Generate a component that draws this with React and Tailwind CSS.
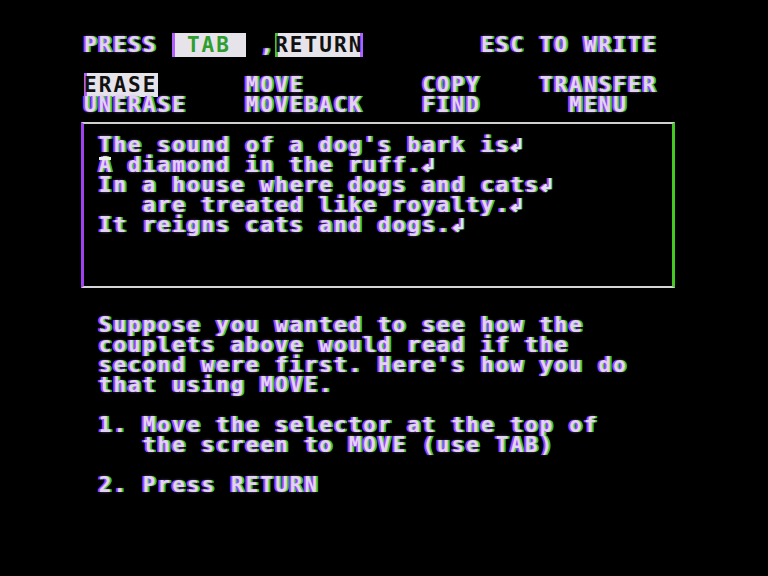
import React from 'react';

const fringe =
  '[text-shadow:-2px_0_0_#a244ff,2px_0_0_#34c834,0_0_3px_rgba(190,140,255,0.5)]';

function Ret() {
  return (
    <svg
      width="14.7"
      height="20"
      viewBox="0 0 14.7 20"
      className="inline-block align-top"
      style={{ filter: 'drop-shadow(-1.5px 0 0 #a244ff) drop-shadow(1.5px 0 0 #34c834)' }}
    >
      <path d="M10 3 V13 H3" fill="none" stroke="#e8def2" strokeWidth="2.6" />
      <path d="M6.5 9.5 L2.5 13 L6.5 16.5" fill="none" stroke="#e8def2" strokeWidth="2.4" />
    </svg>
  );
}

function Row({ children, className = '' }) {
  return (
    <div className={`h-[20px] leading-[20px] whitespace-pre ${className}`}>
      {children || ' '}
    </div>
  );
}

function Inv({ children, className = '' }) {
  return (
    <span className={`bg-[#e6e4ea] [text-shadow:none] ${className}`}>{children}</span>
  );
}

export default function App() {
  return (
    <div className="w-[768px] h-[576px] bg-black overflow-hidden">
      <div
        className={`pl-[84px] pt-[35px] text-[21px] tracking-[2.06px] font-bold text-[#e2d2f4] ${fringe}`}
        style={{ fontFamily: '"DejaVu Sans Mono", "Liberation Mono", monospace' }}
      >
        {/* menu header */}
        <Row>
          {'PRESS '}
          <Inv className="text-[#2f9e2f] shadow-[inset_3px_0_0_#b060ff]">{' TAB '}</Inv>
          {' ,'}
          <Inv className="text-[#111] bg-[#dcefd6] shadow-[inset_3px_0_0_#46c23a,inset_-3px_0_0_#b060ff]">
            RETURN
          </Inv>
          {'        ESC TO WRITE'}
        </Row>
        <Row />
        <Row>
          <Inv className="text-[#111] shadow-[inset_3px_0_0_#b060ff]">ERASE</Inv>
          {'      MOVE        COPY    TRANSFER'}
        </Row>
        <Row>{'UNERASE    MOVEBACK    FIND      MENU'}</Row>

        {/* editing window */}
        <div className="mt-[7px] -ml-[3px] w-[594px] h-[166px] border-t-2 border-b-2 border-l-[3px] border-r-[3px] border-t-[#cfcfcf] border-b-[#d6d6d6] border-l-[#a040f0] border-r-[#44c824] pt-[11px]">
          <Row>
            {' '}
            <span className="relative">
              T
              <span className="absolute left-0 right-[2px] bottom-[-3px] h-[3px] bg-[#e8f0e0]" />
            </span>
            {"he sound of a dog's bark is"}
            <Ret />
          </Row>
          <Row>
            {' A diamond in the ruff.'}
            <Ret />
          </Row>
          <Row>
            {' In a house where dogs and cats'}
            <Ret />
          </Row>
          <Row>
            {'    are treated like royalty.'}
            <Ret />
          </Row>
          <Row>
            {' It reigns cats and dogs.'}
            <Ret />
          </Row>
        </div>

        {/* instructions */}
        <div className="mt-[27px]">
          <Row>{' Suppose you wanted to see how the'}</Row>
          <Row>{' couplets above would read if the'}</Row>
          <Row>{" second were first. Here's how you do"}</Row>
          <Row>{' that using MOVE.'}</Row>
          <Row />
          <Row>{' 1. Move the selector at the top of'}</Row>
          <Row>{'    the screen to MOVE (use TAB)'}</Row>
          <Row />
          <Row>{' 2. Press RETURN'}</Row>
        </div>
      </div>
    </div>
  );
}
